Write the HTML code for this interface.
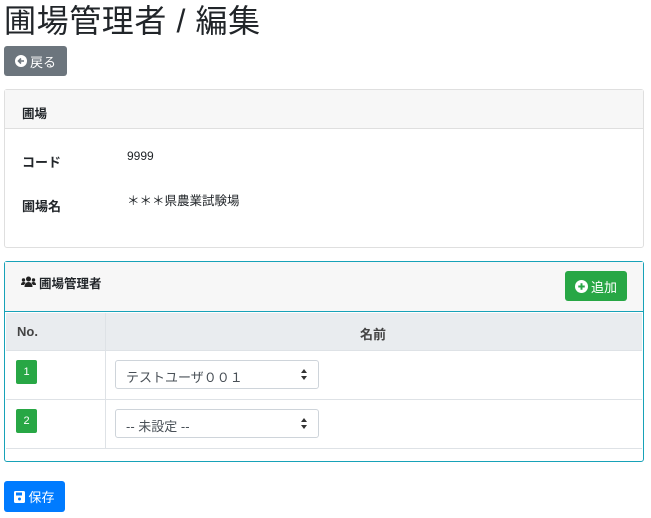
<!DOCTYPE html>
<html><head><meta charset="utf-8"><style>
*{box-sizing:border-box;margin:0;padding:0}
body{width:651px;height:518px;background:#fff;font-family:"Liberation Sans","Noto Sans CJK JP",sans-serif;color:#212529;position:relative;overflow:hidden;font-size:13px}
.a{position:absolute}
h1{position:absolute;left:4px;top:1px;font-size:32px;font-weight:400;line-height:40px;letter-spacing:0.6px}
.btn{position:absolute;color:#fff;border-radius:3px;font-size:13px;display:flex;align-items:center;justify-content:center;gap:3px}
.card{position:absolute;border:1px solid #dfdfdf;border-radius:3px}
.sel{position:absolute;left:115px;width:204px;height:29px;border:1px solid #ced4da;border-radius:3px;font-size:13px;color:#495057;padding:6px 0 0 10px}
.sel:after{content:"";position:absolute;right:11px;top:8px;width:0;height:0;border-left:3px solid transparent;border-right:3px solid transparent;border-bottom:4px solid #333}
.sel:before{content:"";position:absolute;right:11px;top:15px;width:0;height:0;border-left:3px solid transparent;border-right:3px solid transparent;border-top:4px solid #333}
.badge{position:absolute;left:16px;width:21px;height:24px;background:#28a745;color:#fff;border-radius:2px;font-size:11px;text-align:center;line-height:24px}
</style></head><body>
<h1>圃場管理者 / 編集</h1>
<div class="btn" style="left:4px;top:46px;width:63px;height:30px;background:#6c757d"><svg width="12" height="12" viewBox="0 0 12 12"><circle cx="6" cy="6" r="6" fill="#fff"/><path d="M9 6H4M6 3.5L3.5 6 6 8.5" stroke="#6c757d" stroke-width="1.6" fill="none"/></svg>戻る</div>
<div class="card" style="left:4px;top:89px;width:640px;height:159px">
<div style="height:39px;background:#f7f7f7;border-bottom:1px solid #dfdfdf;font-weight:bold;padding:13px 0 0 17px;font-size:12.5px">圃場</div>
<div class="a" style="left:17px;top:62px;font-weight:bold">コード</div>
<div class="a" style="left:122px;top:59px;font-size:12px">9999</div>
<div class="a" style="left:17px;top:106px;font-weight:bold">圃場名</div>
<div class="a" style="left:122px;top:100px;font-size:12.5px">＊＊＊県農業試験場</div>
</div>
<div class="card" style="left:4px;top:261px;width:640px;height:201px;border-color:#17a2b8">
<div style="height:50px;background:#f7f7f7;border-bottom:1px solid #17a2b8;font-weight:bold;padding:11px 0 0 16px;font-size:12.5px;display:flex;gap:3px;align-items:flex-start"><svg width="15" height="12" viewBox="0 0 15 12" style="margin-top:3px"><circle cx="7.5" cy="3" r="2.5" fill="#222"/><circle cx="2.5" cy="4" r="1.7" fill="#222"/><circle cx="12.5" cy="4" r="1.7" fill="#222"/><path d="M3.5 11c0-3 1.8-5 4-5s4 2 4 5z" fill="#222"/><path d="M0 9c0-2 1-3 2.5-3s2 .6 2 1L3 9z" fill="#222"/><path d="M15 9c0-2-1-3-2.5-3s-2 .6-2 1L12 9z" fill="#222"/></svg>圃場管理者</div>
<div class="a" style="left:1px;top:51px;width:636px;height:38px;background:#e9ecef;border-bottom:1px solid #dee2e6"></div>
<div class="a" style="left:100px;top:51px;width:1px;height:136px;background:#dee2e6"></div>
<div class="a" style="left:1px;top:137px;width:636px;height:1px;background:#dee2e6"></div>
<div class="a" style="left:1px;top:186px;width:636px;height:1px;background:#dee2e6"></div>
<div class="a" style="left:12px;top:62px;font-weight:bold;color:#444">No.</div>
<div class="a" style="left:355px;top:62px;font-weight:bold;color:#444">名前</div>
</div>
<div class="btn" style="left:565px;top:271px;width:62px;height:30px;background:#28a745"><svg width="13" height="13" viewBox="0 0 12 12"><circle cx="6" cy="6" r="6" fill="#fff"/><path d="M6 3v6M3 6h6" stroke="#28a745" stroke-width="1.8"/></svg>追加</div>
<div class="badge" style="top:360px">1</div>
<div class="badge" style="top:409px">2</div>
<div class="sel" style="top:360px">テストユーザ００１</div>
<div class="sel" style="top:409px">-- 未設定 --</div>
<div class="btn" style="left:4px;top:481px;width:61px;height:31px;background:#007bff"><svg width="11" height="12" viewBox="0 0 11 12"><rect x="0" y="0" width="11" height="12" rx="1.5" fill="#fff"/><rect x="2" y="1.5" width="6" height="3" fill="#007bff"/><circle cx="5.5" cy="8" r="1.5" fill="#007bff"/></svg>保存</div>
</body></html>
